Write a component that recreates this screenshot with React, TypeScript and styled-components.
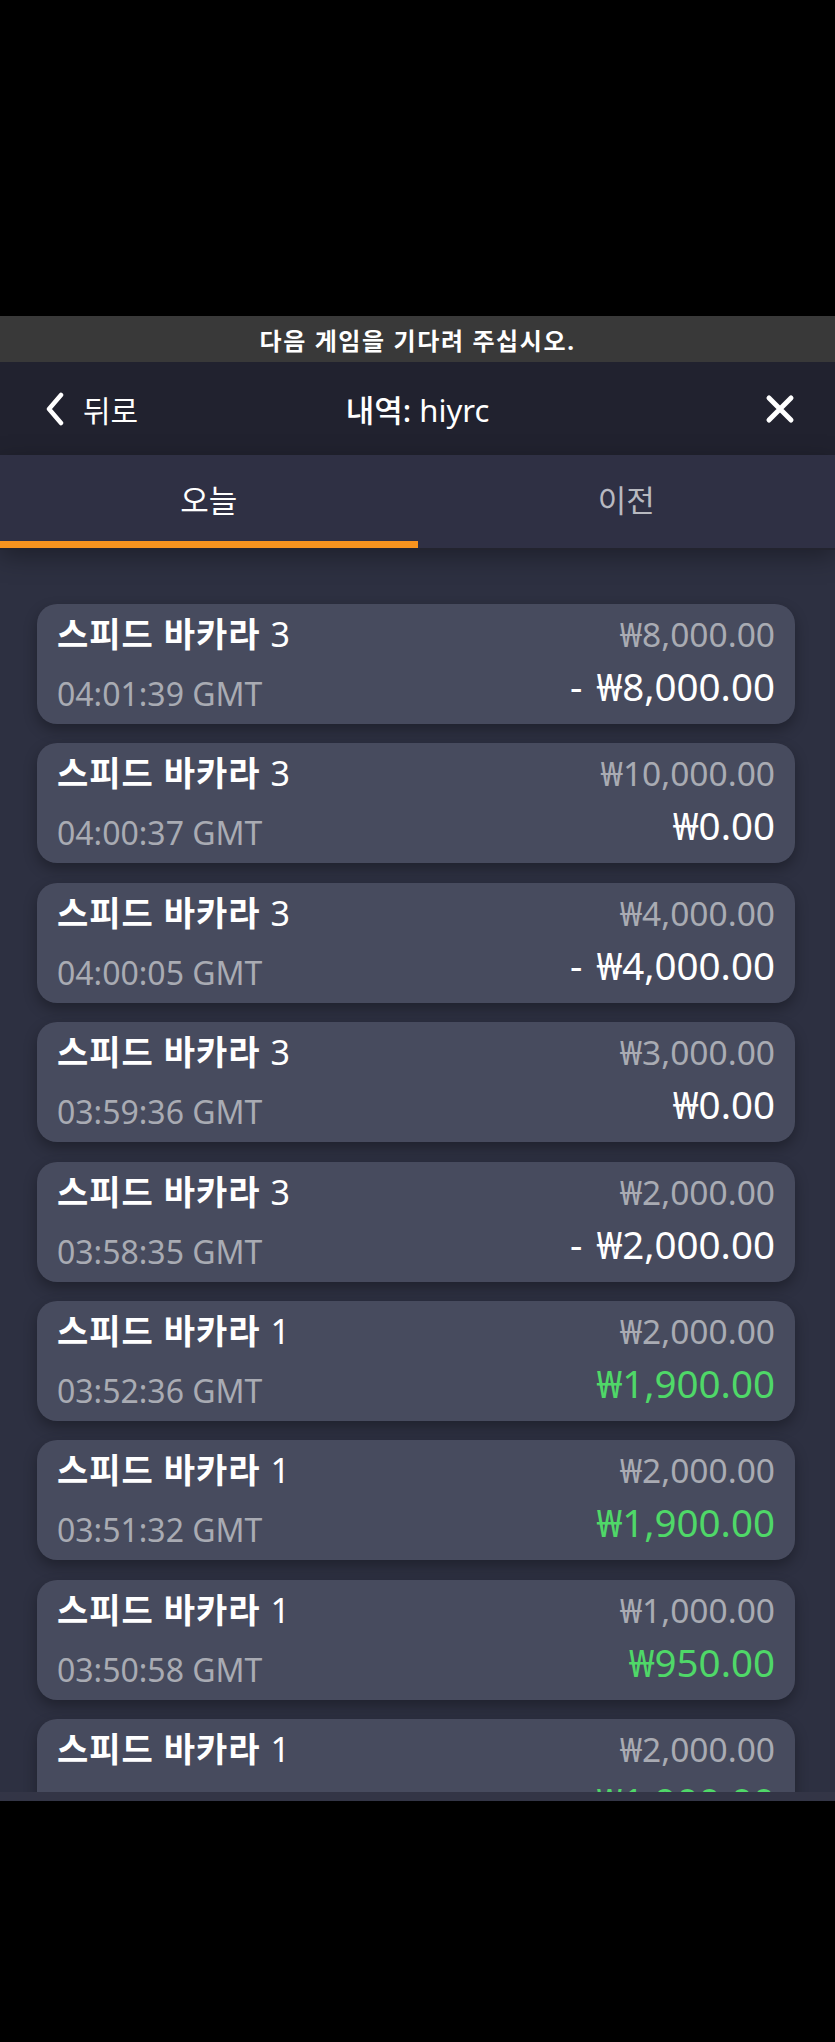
import React from "react";
import styled, { createGlobalStyle } from "styled-components";

interface HistoryItem {
  id: number;
  game: string;
  table: number;
  time: string;
  bet: string;
  result: string;
  win?: boolean;
}

const items: HistoryItem[] = [
  { id: 1, game: "스피드 바카라", table: 3, time: "04:01:39 GMT", bet: "₩8,000.00", result: "- ₩8,000.00" },
  { id: 2, game: "스피드 바카라", table: 3, time: "04:00:37 GMT", bet: "₩10,000.00", result: "₩0.00" },
  { id: 3, game: "스피드 바카라", table: 3, time: "04:00:05 GMT", bet: "₩4,000.00", result: "- ₩4,000.00" },
  { id: 4, game: "스피드 바카라", table: 3, time: "03:59:36 GMT", bet: "₩3,000.00", result: "₩0.00" },
  { id: 5, game: "스피드 바카라", table: 3, time: "03:58:35 GMT", bet: "₩2,000.00", result: "- ₩2,000.00" },
  { id: 6, game: "스피드 바카라", table: 1, time: "03:52:36 GMT", bet: "₩2,000.00", result: "₩1,900.00", win: true },
  { id: 7, game: "스피드 바카라", table: 1, time: "03:51:32 GMT", bet: "₩2,000.00", result: "₩1,900.00", win: true },
  { id: 8, game: "스피드 바카라", table: 1, time: "03:50:58 GMT", bet: "₩1,000.00", result: "₩950.00", win: true },
  { id: 9, game: "스피드 바카라", table: 1, time: "03:49:41 GMT", bet: "₩2,000.00", result: "₩1,900.00", win: true },
];

function App() {
  return (
    <>
      <GlobalStyle />
      <Page>
        <Frame>
          <Banner>다음 게임을 기다려 주십시오.</Banner>
          <Header>
            <BackButton>
              <svg width="20" height="34" viewBox="0 0 20 34" fill="none">
                <path
                  d="M16 3 L4 17 L16 31"
                  stroke="#fff"
                  strokeWidth="4.5"
                  strokeLinecap="round"
                  strokeLinejoin="round"
                />
              </svg>
              뒤로
            </BackButton>
            <Title>
              <strong>내역:</strong> hiyrc
            </Title>
            <CloseButton>
              <svg width="30" height="30" viewBox="0 0 30 30" fill="none">
                <path
                  d="M4 4 L26 26 M26 4 L4 26"
                  stroke="#fff"
                  strokeWidth="5"
                  strokeLinecap="round"
                />
              </svg>
            </CloseButton>
          </Header>
          <Tabs>
            <Tab $active>오늘</Tab>
            <Tab>이전</Tab>
          </Tabs>
          <List>
            {items.map((item) => (
              <Card key={item.id}>
                <Game>
                  {item.game} <TableNo>{item.table}</TableNo>
                </Game>
                <Bet>{item.bet}</Bet>
                <Time>{item.time}</Time>
                <Result $win={item.win}>{item.result}</Result>
              </Card>
            ))}
          </List>
          <Footer />
        </Frame>
      </Page>
    </>
  );
}

export default App;

const GlobalStyle = createGlobalStyle`
  body {
    margin: 0;
    background: #000;
    font-family: "Noto Sans", "Noto Sans CJK KR", sans-serif;
  }
`;

const Page = styled.div`
  width: 835px;
  height: 2042px;
  padding-top: 316px;
  box-sizing: border-box;
  background: #000;
`;

const Frame = styled.div`
  height: 1485px;
  display: flex;
  flex-direction: column;
  overflow: hidden;
`;

const Banner = styled.div`
  height: 46px;
  display: flex;
  align-items: center;
  justify-content: center;
  background: #393939;
  color: #fff;
  font-size: 24px;
  font-weight: 700;
  letter-spacing: 1.6px;
`;

const Header = styled.div`
  height: 93px;
  display: flex;
  align-items: center;
  justify-content: space-between;
  padding: 0 40px 0 45px;
  background: #21222f;
  color: #fff;
  position: relative;
`;

const BackButton = styled.div`
  display: flex;
  align-items: center;
  gap: 18px;
  font-size: 30px;
`;

const Title = styled.div`
  position: absolute;
  left: 0;
  right: 0;
  text-align: center;
  font-size: 31px;
  pointer-events: none;

  strong {
    font-weight: 500;
  }
`;

const CloseButton = styled.div`
  display: flex;
  align-items: center;
`;

const Tabs = styled.div`
  height: 93px;
  display: flex;
  background: #2f3044;
  position: relative;
  z-index: 1;
  box-shadow: 0 2px 0 #23242f, 0 8px 24px rgba(0, 0, 0, 0.35);
`;

const Tab = styled.div<{ $active?: boolean }>`
  flex: 1;
  display: flex;
  align-items: center;
  justify-content: center;
  font-size: 31px;
  color: ${({ $active }) => ($active ? "#fff" : "#b8b9c0")};
  border-bottom: 7px solid ${({ $active }) => ($active ? "#f7931e" : "transparent")};
`;

const List = styled.div`
  flex: 1;
  overflow: hidden;
  padding: 56px 40px 0 37px;
  display: flex;
  flex-direction: column;
  gap: 19.4px;
  background: #2d3041;
`;

const Card = styled.div`
  flex-shrink: 0;
  height: 120px;
  box-sizing: border-box;
  padding: 8px 20px 0 20px;
  border-radius: 20px;
  background: #474b5e;
  box-shadow: 0 6px 14px rgba(0, 0, 0, 0.3);
  display: grid;
  grid-template-columns: 1fr auto;
  grid-template-rows: 50px 56px;
  align-items: start;
`;

const Game = styled.div`
  color: #fff;
  font-size: 34px;
  font-weight: 700;
  line-height: 44px;
  letter-spacing: 1px;
  white-space: nowrap;
`;

const TableNo = styled.span`
  font-weight: 400;
`;

const Bet = styled.div`
  color: #a9abb3;
  font-size: 33.5px;
  line-height: 44px;
  text-align: right;
`;

const Time = styled.div`
  color: #a9abb3;
  font-size: 32px;
  line-height: 48px;
  align-self: end;
`;

const Result = styled.div<{ $win?: boolean }>`
  color: ${({ $win }) => ($win ? "#4fd868" : "#fff")};
  font-size: 38.5px;
  line-height: 48px;
  text-align: right;
  word-spacing: 4px;
`;

const Footer = styled.div`
  height: 9px;
  background: #333546;
`;
